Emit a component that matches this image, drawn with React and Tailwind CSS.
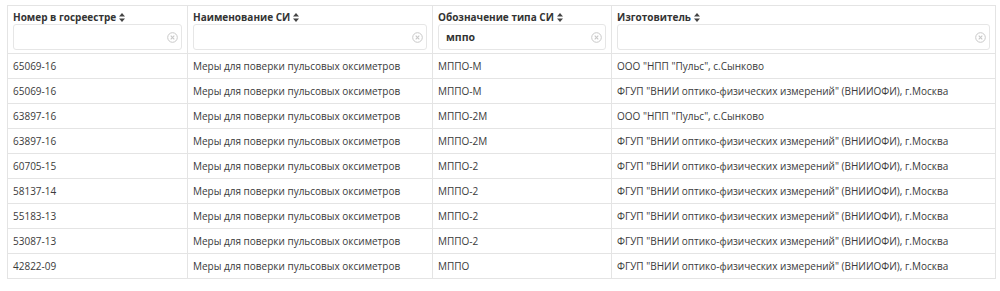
const ROWS = [
  ["65069-16", "Меры для поверки пульсовых оксиметров", "МППО-М", 'ООО "НПП "Пульс", с.Сынково'],
  ["65069-16", "Меры для поверки пульсовых оксиметров", "МППО-М", 'ФГУП "ВНИИ оптико-физических измерений" (ВНИИОФИ), г.Москва'],
  ["63897-16", "Меры для поверки пульсовых оксиметров", "МППО-2М", 'ООО "НПП "Пульс", с.Сынково'],
  ["63897-16", "Меры для поверки пульсовых оксиметров", "МППО-2М", 'ФГУП "ВНИИ оптико-физических измерений" (ВНИИОФИ), г.Москва'],
  ["60705-15", "Меры для поверки пульсовых оксиметров", "МППО-2", 'ФГУП "ВНИИ оптико-физических измерений" (ВНИИОФИ), г.Москва'],
  ["58137-14", "Меры для поверки пульсовых оксиметров", "МППО-2", 'ФГУП "ВНИИ оптико-физических измерений" (ВНИИОФИ), г.Москва'],
  ["55183-13", "Меры для поверки пульсовых оксиметров", "МППО-2", 'ФГУП "ВНИИ оптико-физических измерений" (ВНИИОФИ), г.Москва'],
  ["53087-13", "Меры для поверки пульсовых оксиметров", "МППО-2", 'ФГУП "ВНИИ оптико-физических измерений" (ВНИИОФИ), г.Москва'],
  ["42822-09", "Меры для поверки пульсовых оксиметров", "МППО", 'ФГУП "ВНИИ оптико-физических измерений" (ВНИИОФИ), г.Москва'],
];

const COLUMNS = [
  { title: "Номер в госреестре", width: "w-[180px]", value: "" },
  { title: "Наименование СИ", width: "w-[245px]", value: "" },
  { title: "Обозначение типа СИ", width: "w-[179px]", value: "мппо" },
  { title: "Изготовитель", width: "w-[384px]", value: "" },
];

function SortIcon() {
  return (
    <svg width="6" height="9" viewBox="0 0 6 9" className="inline-block ml-[3px] -mt-[2px]">
      <path d="M3 0 L6 3.6 L0 3.6 Z" fill="#444" />
      <path d="M3 9 L6 5.4 L0 5.4 Z" fill="#444" />
    </svg>
  );
}

function ClearIcon() {
  return (
    <svg width="11" height="11" viewBox="0 0 11 11" className="shrink-0">
      <circle cx="5.5" cy="5.5" r="4.8" fill="none" stroke="#c8c8c8" strokeWidth="1" />
      <path d="M3.7 3.7 L7.3 7.3 M7.3 3.7 L3.7 7.3" stroke="#c8c8c8" strokeWidth="1.1" />
    </svg>
  );
}

export default function App() {
  return (
    <div className="w-[1000px] h-[291px] bg-white pt-[5px] pl-[7px] font-['Open_Sans',sans-serif] text-[#333]">
      <table className="border-collapse table-fixed">
        <thead>
          <tr>
            {COLUMNS.map((c) => (
              <th
                key={c.title}
                className={`${c.width} border border-[#e4e4e4] px-[5px] pt-[4px] pb-[3px] text-left align-top font-bold text-[10px] leading-[14px]`}
              >
                <div className="whitespace-nowrap">
                  {c.title}
                  <SortIcon />
                </div>
                <div className="h-[26px] border border-[#e6e6e6] rounded-[3px] flex items-center pl-[7px] pr-[3px]">
                  <span className="flex-1 text-[10.5px] font-bold text-[#333]">{c.value}</span>
                  <ClearIcon />
                </div>
              </th>
            ))}
          </tr>
        </thead>
        <tbody>
          {ROWS.map((r, i) => (
            <tr key={i} className="h-[25px]">
              {r.map((cell, j) => (
                <td
                  key={j}
                  className="border border-[#e4e4e4] px-[5px] text-[10px] leading-[14px] whitespace-nowrap text-[#3a3a3a]"
                >
                  {cell}
                </td>
              ))}
            </tr>
          ))}
        </tbody>
      </table>
    </div>
  );
}
